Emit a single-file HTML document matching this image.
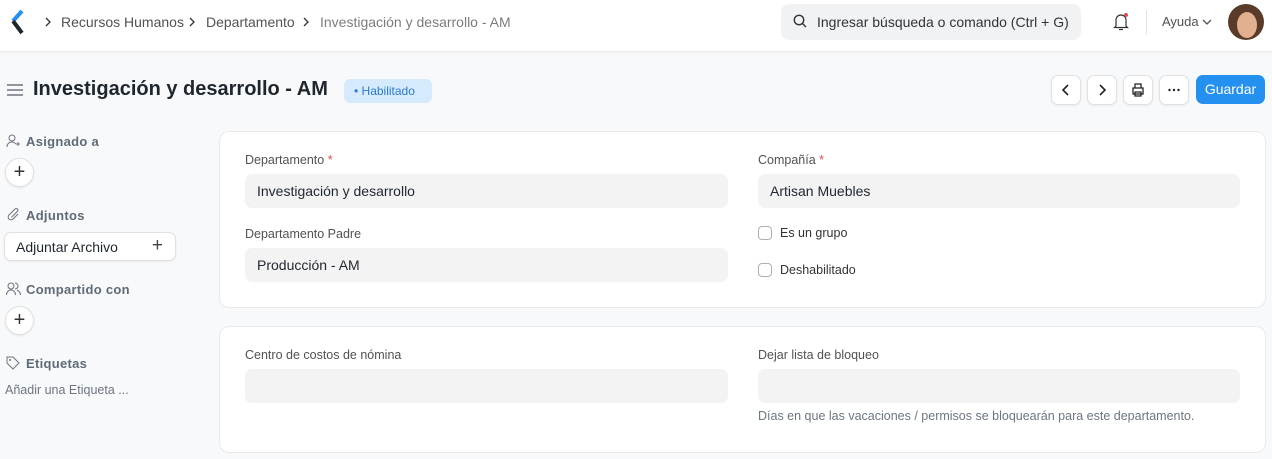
<!DOCTYPE html>
<html><head><meta charset="utf-8"><style>
*{box-sizing:border-box;margin:0;padding:0}
body{width:1272px;height:459px;overflow:hidden;background:#f8f9fa;font-family:"Liberation Sans",sans-serif;color:#1f272e;position:relative}
.nav{position:absolute;left:0;top:0;width:1272px;height:52px;background:#fff;border-bottom:1px solid #e8eaec;box-shadow:0 1px 2px rgba(0,0,0,.04)}
.abs{position:absolute}
.bc{font-size:14px;color:#525252;top:14px}
.sep{top:17px}
.search{left:781px;top:4px;width:300px;height:36px;background:#f1f2f4;border-radius:8px;font-size:14px;color:#333;padding:10px 0 0 36px}
.btn{position:absolute;top:75px;width:30px;height:30px;background:#fff;border:1px solid #dfe2e5;border-radius:7px;box-shadow:0 1px 2px rgba(0,0,0,.06)}
.card{position:absolute;left:219px;width:1047px;background:#fff;border:1px solid #e8eaec;border-radius:10px}
.lbl{position:absolute;font-size:12.5px;color:#525252}
.inp{position:absolute;height:34px;background:#f3f3f4;border-radius:7px;font-size:14px;color:#1f272e;padding:9px 12px}
.side{position:absolute;left:26px;font-size:13px;color:#5f6b76;font-weight:bold;letter-spacing:.3px}
.circ{position:absolute;left:5px;width:29px;height:29px;border-radius:50%;background:#fff;border:1px solid #dfe2e5;box-shadow:0 1px 2px rgba(0,0,0,.08);text-align:center;font-size:20px;line-height:26px;color:#333}
.chk{position:absolute;left:758px;width:14px;height:14px;border:1px solid #a8b0b8;border-radius:4px;background:#fff}
.req{color:#e24c4c}
</style></head><body>
<div class="nav">
<svg class="abs" style="left:10px;top:9px" width="16" height="26" viewBox="0 0 16 26"><path d="M12 2 L3 12" stroke="#2490ef" stroke-width="4"/><path d="M3 12 L12 24" stroke="#1f272e" stroke-width="4"/></svg>
<svg class="abs sep" style="left:44px" width="8" height="10"><path d="M2 1l4 4-4 4" stroke="#333" stroke-width="1.3" fill="none"/></svg>
<div class="abs bc" style="left:61px">Recursos Humanos</div>
<svg class="abs sep" style="left:188px" width="8" height="10"><path d="M2 1l4 4-4 4" stroke="#333" stroke-width="1.3" fill="none"/></svg>
<div class="abs bc" style="left:206px">Departamento</div>
<svg class="abs sep" style="left:302px" width="8" height="10"><path d="M2 1l4 4-4 4" stroke="#333" stroke-width="1.3" fill="none"/></svg>
<div class="abs bc" style="left:320px;color:#7c7c7c">Investigación y desarrollo - AM</div>
<div class="abs search">Ingresar búsqueda o comando (Ctrl + G)</div>
<svg class="abs" style="left:793px;top:14px" width="15" height="15" viewBox="0 0 15 15"><circle cx="6" cy="6" r="4.7" stroke="#333" stroke-width="1.4" fill="none"/><path d="M9.5 9.5L13 13" stroke="#333" stroke-width="1.4"/></svg>
<svg class="abs" style="left:1112px;top:12px" width="18" height="20" viewBox="0 0 18 20"><path d="M4 14 V8 a5 5 0 0 1 10 0 V14 L15.5 15.5 H2.5 Z M7 17.5 h4" stroke="#333" stroke-width="1.2" fill="none"/><circle cx="14" cy="3" r="2" fill="#e24c4c"/></svg>
<div class="abs" style="left:1146px;top:10px;width:1px;height:25px;background:#e2e2e2"></div>
<div class="abs" style="left:1162px;top:14px;font-size:13px;color:#525252">Ayuda</div>
<svg class="abs" style="left:1202px;top:19px" width="10" height="7"><path d="M1 1l4 4 4-4" stroke="#525252" stroke-width="1.3" fill="none"/></svg>
<div class="abs" style="left:1228px;top:4px;width:36px;height:36px;border-radius:50%;background:#5a3a28;overflow:hidden"><div style="position:absolute;left:9px;top:8px;width:20px;height:26px;border-radius:50%;background:#e0b090"></div></div>
</div>
<svg class="abs" style="left:7px;top:84px" width="16" height="12"><path d="M0 1H16M0 6H16M0 11H16" stroke="#6c7680" stroke-width="1.4"/></svg>
<div class="abs" style="left:33px;top:78px;font-size:20px;font-weight:bold;white-space:nowrap">Investigación y desarrollo - AM</div>
<div class="abs" style="left:344px;top:79px;height:24px;width:88px;background:#d6eafd;border-radius:6px;font-size:12px;color:#2a7ad0;padding:5px 0 0 10px">• Habilitado</div>
<div class="btn" style="left:1051px"><svg width="28" height="28"><path d="M16 9l-5 5 5 5" stroke="#222" stroke-width="1.6" fill="none"/></svg></div>
<div class="btn" style="left:1087px"><svg width="28" height="28"><path d="M12 9l5 5-5 5" stroke="#222" stroke-width="1.6" fill="none"/></svg></div>
<div class="btn" style="left:1123px"><svg width="28" height="28"><path d="M9 12h10v6H9z M11 12V8h6v4 M11 16h6v4h-6z" stroke="#222" stroke-width="1.3" fill="none"/></svg></div>
<div class="btn" style="left:1159px"><svg width="28" height="28"><circle cx="9.5" cy="14" r="1.2" fill="#222"/><circle cx="14" cy="14" r="1.2" fill="#222"/><circle cx="18.5" cy="14" r="1.2" fill="#222"/></svg></div>
<div class="abs" style="left:1196px;top:75px;width:69px;height:29px;background:#2490ef;border-radius:7px;color:#fff;font-size:14px;text-align:center;line-height:29px">Guardar</div>

<svg class="abs" style="left:6px;top:134px" width="14" height="14"><circle cx="6" cy="4" r="3" stroke="#6c7680" fill="none"/><path d="M1 13c0-3 2-5 5-5 2 0 3 1 4 2M10 10h4M12 8v4" stroke="#6c7680" fill="none"/></svg>
<div class="side" style="top:134px">Asignado a</div>
<div class="circ" style="top:158px">+</div>
<svg class="abs" style="left:6px;top:208px" width="14" height="14"><path d="M12 6l-5 5a2.5 2.5 0 0 1-4-4l6-6a1.6 1.6 0 0 1 2.4 2.4l-6 6" stroke="#6c7680" fill="none"/></svg>
<div class="side" style="top:208px">Adjuntos</div>
<div class="abs" style="left:4px;top:232px;width:172px;height:29px;background:#fff;border:1px solid #dfe2e5;border-radius:7px;box-shadow:0 1px 2px rgba(0,0,0,.06);font-size:14px;padding:6px 0 0 11px">Adjuntar Archivo<span style="position:absolute;right:12px;top:2px;font-size:19px;color:#444">+</span></div>
<svg class="abs" style="left:6px;top:282px" width="15" height="14"><circle cx="5" cy="4" r="3" stroke="#6c7680" fill="none"/><path d="M0.5 13c0-3 2-5 4.5-5s4.5 2 4.5 5M9 1a3 3 0 0 1 0 6M11 8c2 1 3.5 2.5 3.5 5" stroke="#6c7680" fill="none"/></svg>
<div class="side" style="top:282px">Compartido con</div>
<div class="circ" style="top:306px">+</div>
<svg class="abs" style="left:6px;top:356px" width="14" height="14"><path d="M1 1h6l6 6-6 6-6-6z" stroke="#6c7680" fill="none"/><circle cx="4" cy="4" r="1" fill="#6c7680"/></svg>
<div class="side" style="top:356px">Etiquetas</div>
<div class="abs" style="left:5px;top:383px;font-size:12.5px;color:#6c7680">Añadir una Etiqueta ...</div>

<div class="card" style="top:131px;height:177px"></div>
<div class="lbl" style="left:245px;top:153px">Departamento <span class="req">*</span></div>
<div class="inp" style="left:245px;top:174px;width:483px">Investigación y desarrollo</div>
<div class="lbl" style="left:245px;top:227px">Departamento Padre</div>
<div class="inp" style="left:245px;top:248px;width:483px">Producción - AM</div>
<div class="lbl" style="left:758px;top:153px">Compañía <span class="req">*</span></div>
<div class="inp" style="left:758px;top:174px;width:482px">Artisan Muebles</div>
<div class="chk" style="top:226px"></div><div class="lbl" style="left:780px;top:226px;color:#333">Es un grupo</div>
<div class="chk" style="top:263px"></div><div class="lbl" style="left:780px;top:263px;color:#333">Deshabilitado</div>

<div class="card" style="top:326px;height:127px"></div>
<div class="lbl" style="left:245px;top:348px">Centro de costos de nómina</div>
<div class="inp" style="left:245px;top:369px;width:483px"></div>
<div class="lbl" style="left:758px;top:348px">Dejar lista de bloqueo</div>
<div class="inp" style="left:758px;top:369px;width:482px"></div>
<div class="lbl" style="left:758px;top:409px;color:#6c7680">Días en que las vacaciones / permisos se bloquearán para este departamento.</div>
</body></html>
